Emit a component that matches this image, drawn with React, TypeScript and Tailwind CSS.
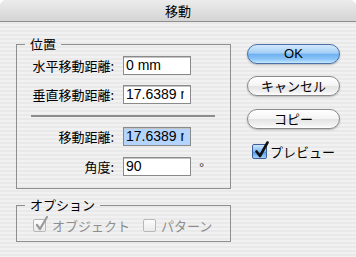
import React from 'react';

const jp = "font-['Noto_Sans_CJK_JP',sans-serif]";
const num = "font-['Liberation_Sans','Noto_Sans_CJK_JP',sans-serif]";

const Field = ({ value, selected }: { value: string; selected?: boolean }) => (
    <div className={`ml-[9px] w-[68px] h-[19px] border border-[#8a8a8a] shadow-[inset_0_1px_0_#c4c4c4] flex items-center pl-[2px] ${selected ? 'bg-[#b4d4fc]' : 'bg-white'}`}>
        <div className="w-[58px] overflow-hidden">
            <span className={`${num} block text-[14px] leading-[17px] whitespace-nowrap`}>{value}</span>
        </div>
    </div>
);

const Row = ({ label, value, selected, unit }: { label: string; value: string; selected?: boolean; unit?: string }) => (
    <div className="flex items-center h-[19px]">
        <span className="w-[97px] text-right text-[13px] leading-[19px] text-black">{label}</span>
        <Field value={value} selected={selected} />
        {unit && <span className={`${num} ml-[8px] mt-[2px] text-[13px] text-[#333]`}>{unit}</span>}
    </div>
);

const DisabledCheck = ({ checked }: { checked?: boolean }) => (
    <span className="relative w-[13px] h-[13px] border border-[#b8b8b8] rounded-[2px] bg-[linear-gradient(#fdfdfd,#eaeaea)]">
        {checked && (
            <svg className="absolute -top-[4px] left-[1px]" width="14" height="16" viewBox="0 0 14 16">
                <path d="M2 9 L5 13 L12 1" fill="none" stroke="#9a9a9a" strokeWidth="2.2" strokeLinecap="round" strokeLinejoin="round" />
            </svg>
        )}
    </span>
);

const Button = ({ children, primary }: { children: React.ReactNode; primary?: boolean }) => (
    <button
        className={`w-[93px] h-[20px] rounded-full text-[13px] leading-[18px] text-black flex items-center justify-center shadow-[0_1px_2px_rgba(0,0,0,0.25)] ${
            primary
                ? 'border border-[#4b6fa8] bg-[linear-gradient(#d2e8fc_0%,#a4cff6_45%,#6fb1f0_52%,#8cc6f8_80%,#c6e9ff_100%)]'
                : 'border border-[#8a8a8a] bg-[linear-gradient(#ffffff_0%,#f4f4f4_48%,#e4e4e4_52%,#f2f2f2_85%,#ffffff_100%)]'
        }`}
    >
        {children}
    </button>
);

export default function App() {
    return (
        <div className={`${jp} w-[356px] h-[257px] rounded-t-[6px] overflow-hidden bg-[repeating-linear-gradient(180deg,#f1f1f1_0px,#f1f1f1_2px,#e9e9e9_2px,#e9e9e9_4px)]`}>
            <div className="h-[22px] border-b border-[#8e8e8e] bg-[linear-gradient(#ececec,#d4d4d4)] flex items-center justify-center text-[13px] text-black">
                移動
            </div>

            <div className="flex pl-[16px] pt-[14px]">
                <div className="w-[215px] flex flex-col">
                    <fieldset className="border border-[#8e8e8e] h-[153px]">
                        <legend className="ml-[8px] px-[5px] text-[13px] leading-[16px] text-black">位置</legend>
                        <div className="flex flex-col pt-[4px]">
                            <Row label="水平移動距離:" value="0 mm" />
                            <div className="mt-[10px]">
                                <Row label="垂直移動距離:" value="17.6389 mm" />
                            </div>
                            <div className="ml-[14px] w-[184px] h-[2px] bg-[#8c8c8c] mt-[11px] mb-[10px]" />
                            <Row label="移動距離:" value="17.6389 mm" selected />
                            <div className="mt-[11px]">
                                <Row label="角度:" value="90" unit="°" />
                            </div>
                        </div>
                    </fieldset>

                    <fieldset className="border border-[#8e8e8e] h-[45px] mt-[8px]">
                        <legend className="ml-[8px] px-[5px] text-[13px] leading-[16px] text-black">オプション</legend>
                        <div className="flex items-center pt-[3px] pl-[16px] text-[13px] text-[#8e8e8e]">
                            <DisabledCheck checked />
                            <span className="ml-[6px]">オブジェクト</span>
                            <span className="ml-[13px] flex"><DisabledCheck /></span>
                            <span className="ml-[5px]">パターン</span>
                        </div>
                    </fieldset>
                </div>

                <div className="ml-[16px] pt-[8px] flex flex-col">
                    <Button primary><span className={num}>OK</span></Button>
                    <div className="mt-[12px]"><Button>キャンセル</Button></div>
                    <div className="mt-[13px]"><Button>コピー</Button></div>
                    <div className="mt-[13px] ml-[5px] flex items-center">
                        <span className="relative w-[15px] h-[15px] rounded-[2px] border border-[#3c5f98] bg-[linear-gradient(#cfe6fc,#7db9f2_50%,#4e9be9_55%,#a5d3fb)]">
                            <svg className="absolute -top-[4px] left-[1px]" width="16" height="18" viewBox="0 0 16 18">
                                <path d="M2.5 10.5 L6 15 L13.5 1.5" fill="none" stroke="#111" strokeWidth="2.6" strokeLinecap="round" strokeLinejoin="round" />
                            </svg>
                        </span>
                        <span className="ml-[3px] text-[13px] text-black">プレビュー</span>
                    </div>
                </div>
            </div>
        </div>
    );
}
